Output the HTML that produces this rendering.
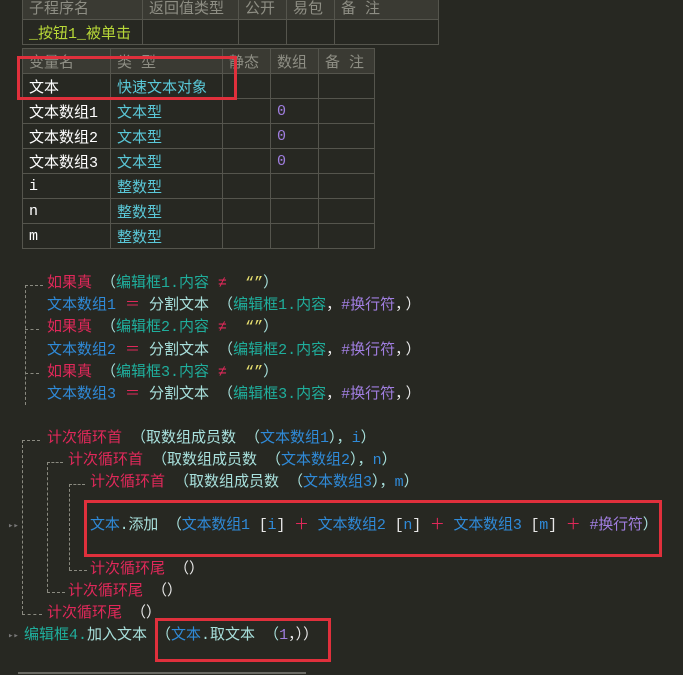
<!DOCTYPE html>
<html><head><meta charset="utf-8"><style>
body{margin:0;width:683px;height:675px;background:#272822;overflow:hidden;position:relative;font-family:"Liberation Mono","Noto Sans CJK SC",monospace;font-size:15px;}
.a{position:absolute;white-space:pre;line-height:20px;}
table{position:absolute;border-collapse:collapse;}
td{border:1px solid #55554d;padding:0 0 0 6px;height:24px;font-size:15px;color:#fff;white-space:nowrap;}
.h td{background:#3a3a33;color:#8e8e84;}
.r{color:#e0285a}.t{color:#1fae9c}.b{color:#2f8ad8}.c{color:#a8e0dc}.p{color:#a07ee0}.y{color:#e8e070}.w{color:#e8e8e8}.cy{color:#5ac8d8}
.box{position:absolute;border:3px solid #e0303c;}
.v{position:absolute;border-left:1px dashed #8a8a80;}
.hz{position:absolute;border-top:1px dashed #8a8a80;}
</style></head><body>
<table style="left:22px;top:-6px;width:417px">
<tr class="h"><td style="width:113px">子程序名</td><td style="width:89px">返回值类型</td><td style="width:41px">公开</td><td style="width:41px">易包</td><td>备 注</td></tr>
<tr><td style="color:#b8d838">_按钮1_被单击</td><td></td><td></td><td></td><td></td></tr>
</table>
<table style="left:22px;top:48px;width:353px">
<tr class="h"><td style="width:81px">变量名</td><td style="width:105px">类 型</td><td style="width:41px">静态</td><td style="width:41px">数组</td><td>备 注</td></tr>
<tr><td>文本</td><td class="cy">快速文本对象</td><td></td><td></td><td></td></tr>
<tr><td>文本数组1</td><td class="cy">文本型</td><td></td><td class="p">0</td><td></td></tr>
<tr><td>文本数组2</td><td class="cy">文本型</td><td></td><td class="p">0</td><td></td></tr>
<tr><td>文本数组3</td><td class="cy">文本型</td><td></td><td class="p">0</td><td></td></tr>
<tr><td>i</td><td class="cy">整数型</td><td></td><td></td><td></td></tr>
<tr><td>n</td><td class="cy">整数型</td><td></td><td></td><td></td></tr>
<tr><td>m</td><td class="cy">整数型</td><td></td><td></td><td></td></tr>
</table>
<div class="box" style="left:17px;top:56px;width:214px;height:38px"></div>

<div class="v" style="left:25px;top:285px;height:120px"></div>
<div class="hz" style="left:25px;top:285px;width:18px"></div>
<div class="hz" style="left:25px;top:329px;width:14px"></div>
<div class="hz" style="left:25px;top:373px;width:14px"></div>
<div class="a r" style="left:47px;top:274px">如果真 <span class="c">（</span><span class="t">编辑框1.内容</span> ≠  <span class="y">“”</span><span class="c">）</span></div>
<div class="a b" style="left:47px;top:296px">文本数组1 <span class="r">＝</span> <span class="c">分割文本 （</span><span class="t">编辑框1.内容</span><span class="w">，</span><span class="p">#换行符</span><span class="w" style="letter-spacing:3px">，）</span></div>
<div class="a r" style="left:47px;top:318px">如果真 <span class="c">（</span><span class="t">编辑框2.内容</span> ≠  <span class="y">“”</span><span class="c">）</span></div>
<div class="a b" style="left:47px;top:341px">文本数组2 <span class="r">＝</span> <span class="c">分割文本 （</span><span class="t">编辑框2.内容</span><span class="w">，</span><span class="p">#换行符</span><span class="w" style="letter-spacing:3px">，）</span></div>
<div class="a r" style="left:47px;top:363px">如果真 <span class="c">（</span><span class="t">编辑框3.内容</span> ≠  <span class="y">“”</span><span class="c">）</span></div>
<div class="a b" style="left:47px;top:385px">文本数组3 <span class="r">＝</span> <span class="c">分割文本 （</span><span class="t">编辑框3.内容</span><span class="w">，</span><span class="p">#换行符</span><span class="w" style="letter-spacing:3px">，）</span></div>

<div class="v" style="left:22px;top:440px;height:174px"></div>
<div class="hz" style="left:22px;top:440px;width:18px"></div>
<div class="hz" style="left:22px;top:614px;width:20px"></div>
<div class="v" style="left:47px;top:462px;height:130px"></div>
<div class="hz" style="left:47px;top:462px;width:16px"></div>
<div class="hz" style="left:47px;top:592px;width:18px"></div>
<div class="v" style="left:69px;top:484px;height:86px"></div>
<div class="hz" style="left:69px;top:484px;width:16px"></div>
<div class="hz" style="left:69px;top:570px;width:18px"></div>
<div class="a" style="left:8px;top:516px;color:#777;font-size:9px">▸▸</div>
<div class="a" style="left:8px;top:626px;color:#777;font-size:9px">▸▸</div>

<div class="a r" style="left:47px;top:429px">计次循环首 <span class="c">（取数组成员数 （</span><span class="b">文本数组1</span><span class="c">），</span><span class="b">i</span><span class="c">）</span></div>
<div class="a r" style="left:68px;top:451px">计次循环首 <span class="c">（取数组成员数 （</span><span class="b">文本数组2</span><span class="c">），</span><span class="b">n</span><span class="c">）</span></div>
<div class="a r" style="left:90px;top:473px">计次循环首 <span class="c">（取数组成员数 （</span><span class="b">文本数组3</span><span class="c">），</span><span class="b">m</span><span class="c">）</span></div>
<div class="a b" style="left:90px;top:516px;letter-spacing:-0.18px">文本<span class="c">.添加 （</span>文本数组1 <span class="w">[</span>i<span class="w">]</span> <span class="r">＋</span> 文本数组2 <span class="w">[</span>n<span class="w">]</span> <span class="r">＋</span> 文本数组3 <span class="w">[</span>m<span class="w">]</span> <span class="r">＋</span> <span class="p">#换行符</span><span class="c">）</span></div>
<div class="a r" style="left:90px;top:560px">计次循环尾 <span class="w">（）</span></div>
<div class="a r" style="left:68px;top:582px">计次循环尾 <span class="w">（）</span></div>
<div class="a r" style="left:47px;top:604px">计次循环尾 <span class="w">（）</span></div>
<div class="a t" style="left:24px;top:626px">编辑框4.<span class="c">加入文本 （</span><span class="b">文本</span><span class="c">.取文本 （</span><span class="p">1</span><span class="w">，））</span></div>

<div class="box" style="left:84px;top:500px;width:572px;height:51px"></div>
<div class="box" style="left:155px;top:618px;width:170px;height:38px"></div>
<div style="position:absolute;left:18px;top:672px;width:288px;height:2px;background:#6a6a64"></div>
</body></html>
